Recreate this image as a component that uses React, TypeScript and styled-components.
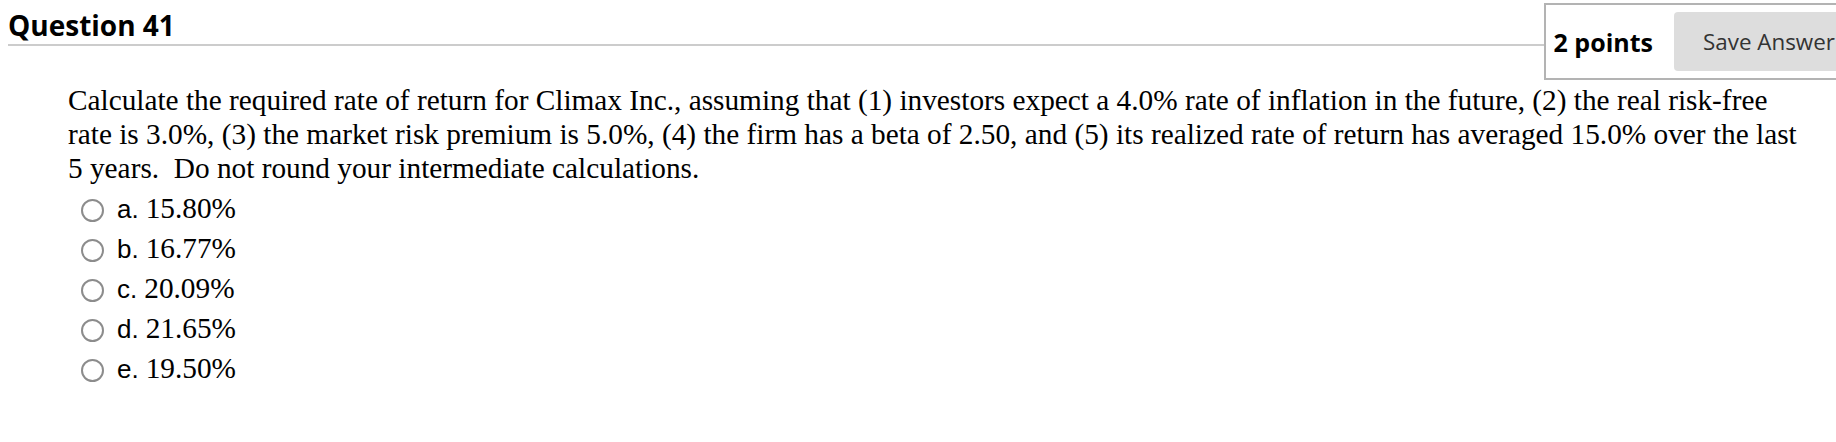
import React from 'react';
import styled, { createGlobalStyle } from 'styled-components';

const GlobalStyle = createGlobalStyle`
  html, body {
    margin: 0;
    padding: 0;
    background: #ffffff;
    overflow: hidden;
  }
`;

const Page = styled.div`
  width: 1874px;
  padding-left: 8px;
  color: #000;
`;

const Header = styled.div`
  display: flex;
  align-items: flex-start;
`;

const Title = styled.h2`
  flex: 1;
  margin: 0;
  padding-top: 6px;
  height: 38px;
  line-height: 38px;
  font-family: "Open Sans", sans-serif;
  font-size: 28px;
  font-weight: 700;
  border-bottom: 2px solid #cccccc;
`;

const PointsBox = styled.div`
  margin-top: 3px;
  height: 73px;
  display: flex;
  align-items: center;
  gap: 21px;
  padding: 0 14px 0 8px;
  border: 2px solid #b3b3b3;
`;

const Points = styled.span`
  font-family: "Open Sans", sans-serif;
  font-size: 25px;
  font-weight: 700;
`;

const SaveButton = styled.button`
  width: 192px;
  height: 59px;
  padding: 0 0 0 29px;
  border: none;
  border-radius: 4px;
  background: #dddddd;
  color: #333333;
  text-align: left;
  white-space: nowrap;
  font-family: "Open Sans", sans-serif;
  font-size: 22.4px;
`;

const Body = styled.div`
  margin-top: 3px;
  padding-left: 60px;
`;

const QuestionText = styled.p`
  width: 1740px;
  margin: 0;
  font-family: "Liberation Serif", "Times New Roman", serif;
  font-size: 29.3px;
  line-height: 34px;
`;

const Options = styled.ul`
  list-style: none;
  margin: 5px 0 0;
  padding: 0 0 0 13px;
`;

const Option = styled.li`
  display: flex;
  align-items: center;
  height: 40px;
  gap: 13px;
`;

const Radio = styled.span`
  width: 23px;
  height: 23px;
  box-sizing: border-box;
  border: 2px solid #8c8c8c;
  border-radius: 50%;
  background: #fff;
  flex-shrink: 0;
`;

const OptionText = styled.span`
  line-height: 40px;
  white-space: nowrap;
`;

const Letter = styled.span`
  margin-right: 3px;
  font-family: "Liberation Sans", Arial, sans-serif;
  font-size: 26px;
`;

const Value = styled.span`
  font-family: "Liberation Serif", "Times New Roman", serif;
  font-size: 29.3px;
`;

const answers = [
  { letter: 'a.', value: '15.80%' },
  { letter: 'b.', value: '16.77%' },
  { letter: 'c.', value: '20.09%' },
  { letter: 'd.', value: '21.65%' },
  { letter: 'e.', value: '19.50%' },
];

const App: React.FC = () => {
  return (
    <>
      <GlobalStyle />
      <Page>
        <Header>
          <Title>Question 41</Title>
          <PointsBox>
            <Points>2 points</Points>
            <SaveButton>Save Answer</SaveButton>
          </PointsBox>
        </Header>
        <Body>
          <QuestionText>
            Calculate the required rate of return for Climax Inc., assuming that (1) investors expect a 4.0% rate
            of inflation in the future, (2) the real risk-free rate is 3.0%, (3) the market risk premium is 5.0%,
            (4) the firm has a beta of 2.50, and (5) its realized rate of return has averaged 15.0% over the last
            5 years.&nbsp; Do not round your intermediate calculations.
          </QuestionText>
          <Options>
            {answers.map(a => (
              <Option key={a.letter}>
                <Radio />
                <OptionText>
                  <Letter>{a.letter}</Letter> <Value>{a.value}</Value>
                </OptionText>
              </Option>
            ))}
          </Options>
        </Body>
      </Page>
    </>
  );
};

export default App;
